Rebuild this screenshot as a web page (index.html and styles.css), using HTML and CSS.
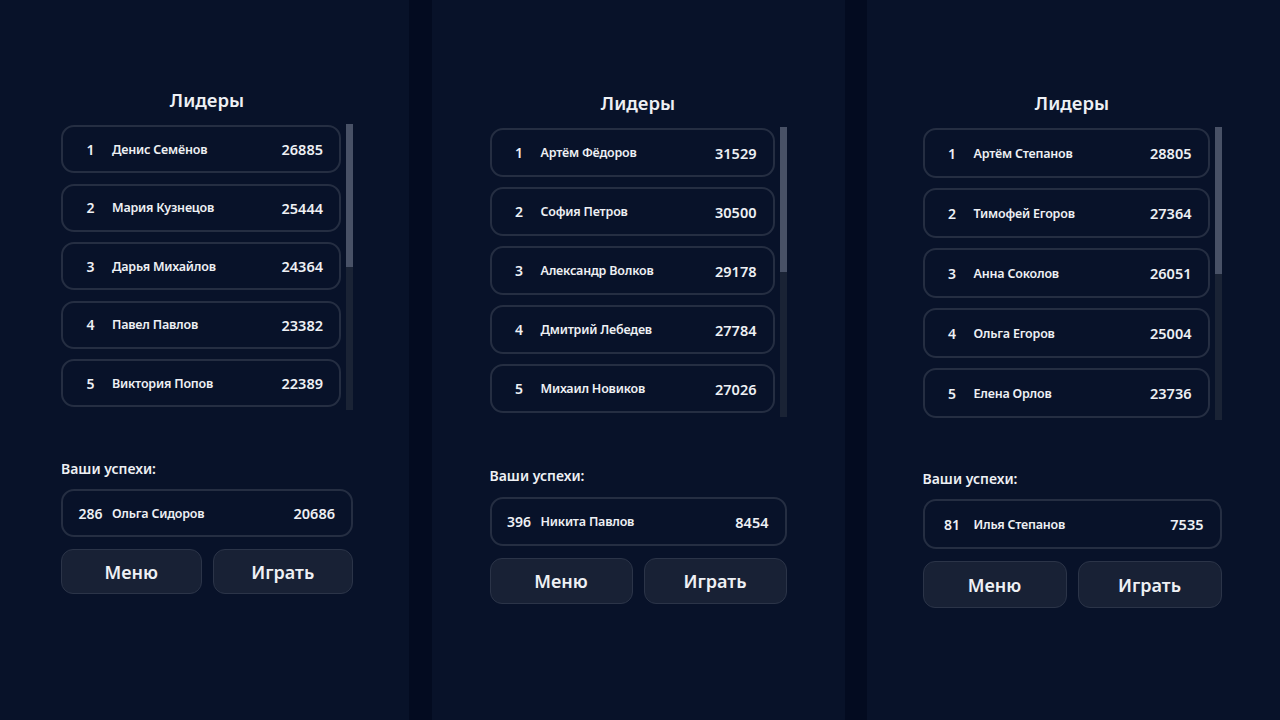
FILE: index.html
```html
<!DOCTYPE html>
<html lang="ru">
<head>
    <meta charset="UTF-8">
    <meta name="viewport" content="width=device-width, initial-scale=1.0">
    <title>Лидеры</title>
    <link rel="stylesheet" href="styles.css">
</head>
<body>
    <div class="screens">

        <div class="screen screen-a">
            <div class="board">
                <h2 class="board-title">Лидеры</h2>
                <div class="leaders-wrap">
                    <div class="leaders">
                        <div class="row"><span class="rank">1</span><span class="name">Денис Семёнов</span><span class="score">26885</span></div>
                        <div class="row"><span class="rank">2</span><span class="name">Мария Кузнецов</span><span class="score">25444</span></div>
                        <div class="row"><span class="rank">3</span><span class="name">Дарья Михайлов</span><span class="score">24364</span></div>
                        <div class="row"><span class="rank">4</span><span class="name">Павел Павлов</span><span class="score">23382</span></div>
                        <div class="row"><span class="rank">5</span><span class="name">Виктория Попов</span><span class="score">22389</span></div>
                    </div>
                    <div class="scrollbar"><div class="thumb"></div></div>
                </div>
                <div class="mine-label">Ваши успехи:</div>
                <div class="row mine"><span class="rank">286</span><span class="name">Ольга Сидоров</span><span class="score">20686</span></div>
                <div class="actions">
                    <button class="btn">Меню</button>
                    <button class="btn">Играть</button>
                </div>
            </div>
        </div>

        <div class="screen screen-b">
            <div class="board">
                <h2 class="board-title">Лидеры</h2>
                <div class="leaders-wrap">
                    <div class="leaders">
                        <div class="row"><span class="rank">1</span><span class="name">Артём Фёдоров</span><span class="score">31529</span></div>
                        <div class="row"><span class="rank">2</span><span class="name">София Петров</span><span class="score">30500</span></div>
                        <div class="row"><span class="rank">3</span><span class="name">Александр Волков</span><span class="score">29178</span></div>
                        <div class="row"><span class="rank">4</span><span class="name">Дмитрий Лебедев</span><span class="score">27784</span></div>
                        <div class="row"><span class="rank">5</span><span class="name">Михаил Новиков</span><span class="score">27026</span></div>
                    </div>
                    <div class="scrollbar"><div class="thumb"></div></div>
                </div>
                <div class="mine-label">Ваши успехи:</div>
                <div class="row mine"><span class="rank">396</span><span class="name">Никита Павлов</span><span class="score">8454</span></div>
                <div class="actions">
                    <button class="btn">Меню</button>
                    <button class="btn">Играть</button>
                </div>
            </div>
        </div>

        <div class="screen screen-c">
            <div class="board">
                <h2 class="board-title">Лидеры</h2>
                <div class="leaders-wrap">
                    <div class="leaders">
                        <div class="row"><span class="rank">1</span><span class="name">Артём Степанов</span><span class="score">28805</span></div>
                        <div class="row"><span class="rank">2</span><span class="name">Тимофей Егоров</span><span class="score">27364</span></div>
                        <div class="row"><span class="rank">3</span><span class="name">Анна Соколов</span><span class="score">26051</span></div>
                        <div class="row"><span class="rank">4</span><span class="name">Ольга Егоров</span><span class="score">25004</span></div>
                        <div class="row"><span class="rank">5</span><span class="name">Елена Орлов</span><span class="score">23736</span></div>
                    </div>
                    <div class="scrollbar"><div class="thumb"></div></div>
                </div>
                <div class="mine-label">Ваши успехи:</div>
                <div class="row mine"><span class="rank">81</span><span class="name">Илья Степанов</span><span class="score">7535</span></div>
                <div class="actions">
                    <button class="btn">Меню</button>
                    <button class="btn">Играть</button>
                </div>
            </div>
        </div>

    </div>
</body>
</html>
```

FILE: styles.css
```css
body {
    margin: 0;
    height: 720px;
    overflow: hidden;
    background-color: #030b20;
    font-family: 'Noto Sans', 'Open Sans', sans-serif;
    color: #eef0f4;
}

.screens {
    display: flex;
    height: 720px;
}

.screen {
    background-color: #081229;
    display: flex;
    justify-content: center;
}

/* each screen is a slightly different device size */
.screen-a {
    width: 409px;
    margin-right: 23px;
    --board-w: 292px;
    --top: 88px;
    --row-h: 48px;
    --row-gap: 10.5px;
    --list-h: 286px;
    --mine-gap: 10px;
    --btn-h: 45px;
    --shift: 5px;
}

.screen-b {
    width: 413px;
    margin-right: 22px;
    --board-w: 297px;
    --top: 91px;
    --row-h: 49px;
    --row-gap: 10px;
    --list-h: 290px;
    --mine-gap: 11px;
    --btn-h: 46px;
    --shift: -1px;
}

.screen-c {
    width: 413px;
    --board-w: 299px;
    --top: 91px;
    --row-h: 50px;
    --row-gap: 10px;
    --list-h: 293px;
    --mine-gap: 10px;
    --btn-h: 47px;
    --shift: -3px;
}

.board {
    width: var(--board-w);
    padding-top: var(--top);
    margin-left: var(--shift);
    display: flex;
    flex-direction: column;
}

.board-title {
    margin: 0 0 12px 0;
    text-align: center;
    font-size: 18.5px;
    font-weight: 600;
    line-height: 24px;
}

.leaders-wrap {
    display: flex;
    gap: 5px;
    height: var(--list-h);
}

.leaders {
    flex: 1;
    overflow: hidden;
    display: flex;
    flex-direction: column;
    gap: var(--row-gap);
    padding-top: 1px;
}

.scrollbar {
    width: 7px;
    background-color: #1a2335;
    display: flex;
    flex-direction: column;
}

.thumb {
    height: 50%;
    background-color: #485166;
}

.row {
    flex: none;
    display: flex;
    align-items: center;
    height: var(--row-h);
    box-sizing: border-box;
    border: 2px solid #252e42;
    border-radius: 13px;
    padding: 0 16px 0 12px;
}

.rank {
    width: 31px;
    text-align: center;
    font-size: 14px;
    font-weight: 600;
    margin-right: 6px;
}

.name {
    flex: 1;
    font-size: 12.5px;
    font-weight: 600;
    letter-spacing: -0.2px;
}

.score {
    font-size: 14.5px;
    font-weight: 600;
}

.mine-label {
    margin-top: 49px;
    margin-bottom: var(--mine-gap);
    font-size: 14px;
    font-weight: 600;
    line-height: 20px;
}

.actions {
    display: flex;
    gap: 11px;
    margin-top: 12px;
}

.btn {
    flex: 1;
    height: var(--btn-h);
    background-color: #182135;
    color: #eef0f4;
    border: 1px solid #2b3448;
    border-radius: 12px;
    font-family: inherit;
    font-size: 18px;
    font-weight: 600;
    cursor: pointer;
}

.btn:hover {
    background-color: #1f2a42;
}
```
